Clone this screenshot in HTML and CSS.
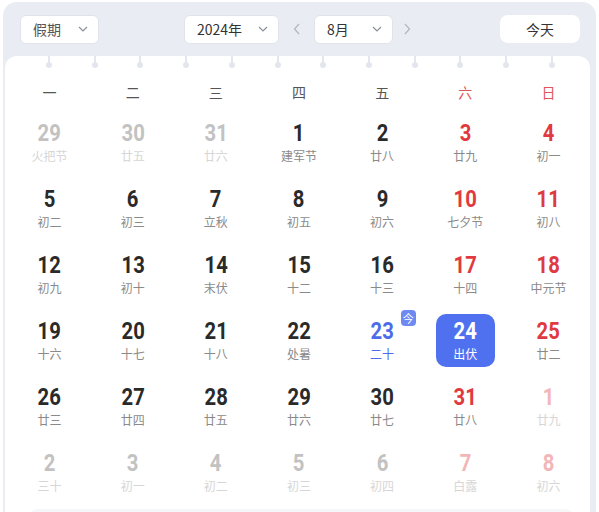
FILE: index.html
```html
<!DOCTYPE html>
<html lang="zh">
<head>
<meta charset="utf-8">
<title>日历</title>
<link rel="stylesheet" href="styles.css">
</head>
<body>
<div class="app">
  <div class="header">
    <div class="select sel-holiday"><span>假期</span><svg class="chev" viewBox="0 0 10 6" width="10" height="6"><path d="M1 1l4 4 4-4" fill="none" stroke="#8a8f99" stroke-width="1.2"/></svg></div>
    <div class="select sel-year"><span>2024年</span><svg class="chev" viewBox="0 0 10 6" width="10" height="6"><path d="M1 1l4 4 4-4" fill="none" stroke="#8a8f99" stroke-width="1.2"/></svg></div>
    <div class="arrow arrow-prev"><svg viewBox="0 0 7 12" width="7" height="12"><path d="M6 1L1.5 6 6 11" fill="none" stroke="#b4b8c0" stroke-width="1.3"/></svg></div>
    <div class="select sel-month"><span>8月</span><svg class="chev" viewBox="0 0 10 6" width="10" height="6"><path d="M1 1l4 4 4-4" fill="none" stroke="#8a8f99" stroke-width="1.2"/></svg></div>
    <div class="arrow arrow-next"><svg viewBox="0 0 7 12" width="7" height="12"><path d="M1 1l4.5 5L1 11" fill="none" stroke="#b4b8c0" stroke-width="1.3"/></svg></div>
    <div class="today-btn">今天</div>
  </div>
  <div class="card">
    <div class="pins">
      <i class="pin"></i><i class="pin"></i><i class="pin"></i><i class="pin"></i><i class="pin"></i><i class="pin"></i><i class="pin"></i><i class="pin"></i><i class="pin"></i><i class="pin"></i><i class="pin"></i><i class="pin"></i>
    </div>
    <div class="weekdays">
      <span>一</span><span>二</span><span>三</span><span>四</span><span>五</span><span class="we">六</span><span class="we">日</span>
    </div>
    <div class="grid">
      <div class="cell faded"><b>29</b><small>火把节</small></div>
      <div class="cell faded"><b>30</b><small>廿五</small></div>
      <div class="cell faded"><b>31</b><small>廿六</small></div>
      <div class="cell"><b>1</b><small>建军节</small></div>
      <div class="cell"><b>2</b><small>廿八</small></div>
      <div class="cell red"><b>3</b><small>廿九</small></div>
      <div class="cell red"><b>4</b><small>初一</small></div>

      <div class="cell"><b>5</b><small>初二</small></div>
      <div class="cell"><b>6</b><small>初三</small></div>
      <div class="cell"><b>7</b><small>立秋</small></div>
      <div class="cell"><b>8</b><small>初五</small></div>
      <div class="cell"><b>9</b><small>初六</small></div>
      <div class="cell red"><b>10</b><small>七夕节</small></div>
      <div class="cell red"><b>11</b><small>初八</small></div>

      <div class="cell"><b>12</b><small>初九</small></div>
      <div class="cell"><b>13</b><small>初十</small></div>
      <div class="cell"><b>14</b><small>末伏</small></div>
      <div class="cell"><b>15</b><small>十二</small></div>
      <div class="cell"><b>16</b><small>十三</small></div>
      <div class="cell red"><b>17</b><small>十四</small></div>
      <div class="cell red"><b>18</b><small>中元节</small></div>

      <div class="cell"><b>19</b><small>十六</small></div>
      <div class="cell"><b>20</b><small>十七</small></div>
      <div class="cell"><b>21</b><small>十八</small></div>
      <div class="cell"><b>22</b><small>处暑</small></div>
      <div class="cell today"><b>23</b><small>二十</small><em class="badge">今</em></div>
      <div class="cell selected"><b>24</b><small>出伏</small></div>
      <div class="cell red"><b>25</b><small>廿二</small></div>

      <div class="cell"><b>26</b><small>廿三</small></div>
      <div class="cell"><b>27</b><small>廿四</small></div>
      <div class="cell"><b>28</b><small>廿五</small></div>
      <div class="cell"><b>29</b><small>廿六</small></div>
      <div class="cell"><b>30</b><small>廿七</small></div>
      <div class="cell red"><b>31</b><small>廿八</small></div>
      <div class="cell faded red"><b>1</b><small>廿九</small></div>

      <div class="cell faded"><b>2</b><small>三十</small></div>
      <div class="cell faded"><b>3</b><small>初一</small></div>
      <div class="cell faded"><b>4</b><small>初二</small></div>
      <div class="cell faded"><b>5</b><small>初三</small></div>
      <div class="cell faded"><b>6</b><small>初四</small></div>
      <div class="cell faded red"><b>7</b><small>白露</small></div>
      <div class="cell faded red"><b>8</b><small>初六</small></div>
    </div>
    <div class="next-card"></div>
  </div>
</div>
</body>
</html>
```

FILE: styles.css
```css
html, body {
  margin: 0;
  padding: 0;
  background: #ffffff;
}
body {
  font-family: "Noto Sans CJK SC", "Noto Sans", sans-serif;
  overflow: hidden;
  height: 512px;
}
.app {
  margin: 2px 3px 0 3px;
  width: 593px;
  height: 510px;
  box-sizing: border-box;
  background: #e9ecf3;
  border-radius: 14px 14px 0 0;
  padding: 0 6px 0 2px;
  overflow: hidden;
}
.header {
  display: flex;
  align-items: center;
  height: 54px;
  padding: 0 10px 0 15px;
  box-sizing: border-box;
}
.select {
  height: 29px;
  box-sizing: border-box;
  background: #ffffff;
  border: 1px solid #e0e3eb;
  border-radius: 6px;
  display: flex;
  align-items: center;
  justify-content: space-between;
  padding: 0 10px 0 12px;
  font-size: 14px;
  color: #333;
}
.select span { line-height: 1; }
.chev { display: block; }
.sel-holiday { width: 79px; color: #555; }
.sel-year { width: 95px; margin-left: 85px; }
.sel-month { width: 79px; }
.arrow {
  height: 29px;
  display: flex;
  align-items: center;
  justify-content: center;
}
.arrow svg { display: block; }
.arrow-prev { width: 35px; }
.arrow-next { width: 28px; }
.today-btn {
  margin-left: auto;
  width: 80px;
  height: 28px;
  background: #ffffff;
  border-radius: 8px;
  display: flex;
  align-items: center;
  justify-content: center;
  font-size: 14px;
  color: #333;
}
.card {
  background: #ffffff;
  border-radius: 12px 12px 0 0;
  height: 456px;
  padding-left: 3px;
  box-sizing: border-box;
}
.pins {
  display: flex;
  justify-content: space-between;
  padding: 0 35px 0 38px;
  height: 12px;
}
.pin {
  display: block;
  width: 6px;
  height: 12px;
}
.pin::before {
  content: "";
  display: block;
  width: 2px;
  height: 7px;
  margin: 0 auto;
  background: #e3e6ee;
}
.pin::after {
  content: "";
  display: block;
  width: 6px;
  height: 6px;
  margin-top: -1px;
  border-radius: 50%;
  background: #e3e6ee;
}
.weekdays {
  display: grid;
  grid-template-columns: repeat(7, 1fr);
  width: 582px;
  height: 48px;
  align-items: center;
  font-size: 14px;
  color: #555;
}
.weekdays span {
  text-align: center;
}
.weekdays .we { color: #e0575b; }
.grid {
  display: grid;
  grid-template-columns: repeat(7, 1fr);
  grid-auto-rows: 53px;
  row-gap: 13px;
  width: 582px;
}
.cell {
  position: relative;
  width: 59px;
  height: 53px;
  justify-self: center;
  display: flex;
  flex-direction: column;
  align-items: center;
  justify-content: center;
  border-radius: 10px;
  box-sizing: border-box;
  padding-bottom: 2px;
}
.cell b {
  display: block;
  font-family: Roboto, "DejaVu Sans", sans-serif;
  font-weight: 700;
  font-size: 23px;
  line-height: 27px;
  height: 27px;
  color: #2a2a2a;
  transform: scaleX(0.88);
}
.cell small {
  font-size: 12px;
  line-height: 17px;
  height: 17px;
  color: #8a8a8a;
  white-space: nowrap;
}
.cell.red b { color: #df3a3f; }
.cell.faded b { color: #c2c2c2; }
.cell.faded small { color: #d6d6d6; }
.cell.faded.red b { color: #f3b6b8; }
.cell.today b { color: #4d6cea; }
.cell.today small { color: #4d6cea; }
.cell.selected {
  background: #5071ef;
}
.cell.selected b,
.cell.selected small { color: #ffffff; }
.badge {
  position: absolute;
  top: -4px;
  right: -4px;
  width: 15px;
  height: 16px;
  border-radius: 4px;
  background: #6e89f2;
  color: #ffffff;
  font-style: normal;
  font-size: 11px;
  line-height: 16px;
  text-align: center;
}
.next-card {
  margin: 10px 15px 0 20px;
  height: 20px;
  background: #f6f7f9;
  border-radius: 10px 10px 0 0;
}
```
